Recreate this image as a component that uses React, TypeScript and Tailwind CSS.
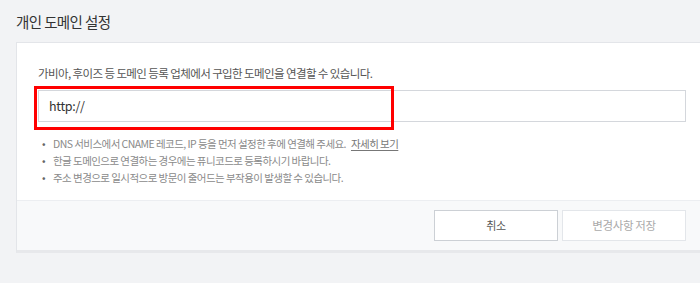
const font = "font-['Noto_Sans_CJK_KR','Noto_Sans',sans-serif]";

const notes = [
	"한글 도메인으로 연결하는 경우에는 퓨니코드로 등록하시기 바랍니다.",
	"주소 변경으로 일시적으로 방문이 줄어드는 부작용이 발생할 수 있습니다.",
];

export default function App() {
	return (
		<div className={`${font} w-[700px] h-[283px] overflow-hidden bg-[#f2f3f5] pl-4`}>
			<div className="h-[42px] pt-[11px] text-[14.5px] tracking-[-0.6px] leading-[22px] text-[#333]">개인 도메인 설정</div>

			<div className="w-[692px] bg-white border border-[#e3e5e9] border-b-[3px] border-b-[#e7e8eb]">
				<div className="px-[21px] pt-[21px] pb-[14px]">
					<p className="text-[11.5px] tracking-[-0.6px] leading-[18px] text-[#555]">
						가비아, 후이즈 등 도메인 등록 업체에서 구입한 도메인을 연결할 수 있습니다.
					</p>

					<div className="relative mt-[8px]">
						<div className="h-[32px] border border-[#d4d7dc] flex items-center px-[10px] text-[12.5px] tracking-[-0.3px] text-[#333]">
							http://
						</div>
						<div className="absolute -left-[4px] -top-[4px] w-[360px] h-[44px] border-[3px] border-[#ff0000]" />
					</div>

					<ul className="mt-[13px] text-[10.5px] tracking-[-0.55px] leading-[17px] text-[#8a8a8a]">
						<li className="flex items-center">
							<span className="w-[15px] pl-[4px] text-[#666]">•</span>
							<span>DNS 서비스에서 CNAME 레코드, IP 등을 먼저 설정한 후에 연결해 주세요.</span>
							<span className="ml-[5px] underline underline-offset-2 text-[#777]">자세히 보기</span>
						</li>
						{notes.map((n) => (
							<li key={n} className="flex items-center">
								<span className="w-[15px] pl-[4px] text-[#666]">•</span>
								<span>{n}</span>
							</li>
						))}
					</ul>
				</div>

				<div className="h-[50px] bg-[#f8f9fa] border-t border-[#eceef1] flex items-center pl-[417px] gap-[4px]">
					<button className="w-[124px] h-[31px] bg-white border border-[#ccd0d5] text-[11px] tracking-[-0.3px] text-[#555]">
						취소
					</button>
					<button className="w-[124px] h-[31px] bg-white border border-[#e3e6ea] text-[11.5px] tracking-[-0.4px] text-[#aaa]">
						변경사항 저장
					</button>
				</div>
			</div>
		</div>
	);
}
